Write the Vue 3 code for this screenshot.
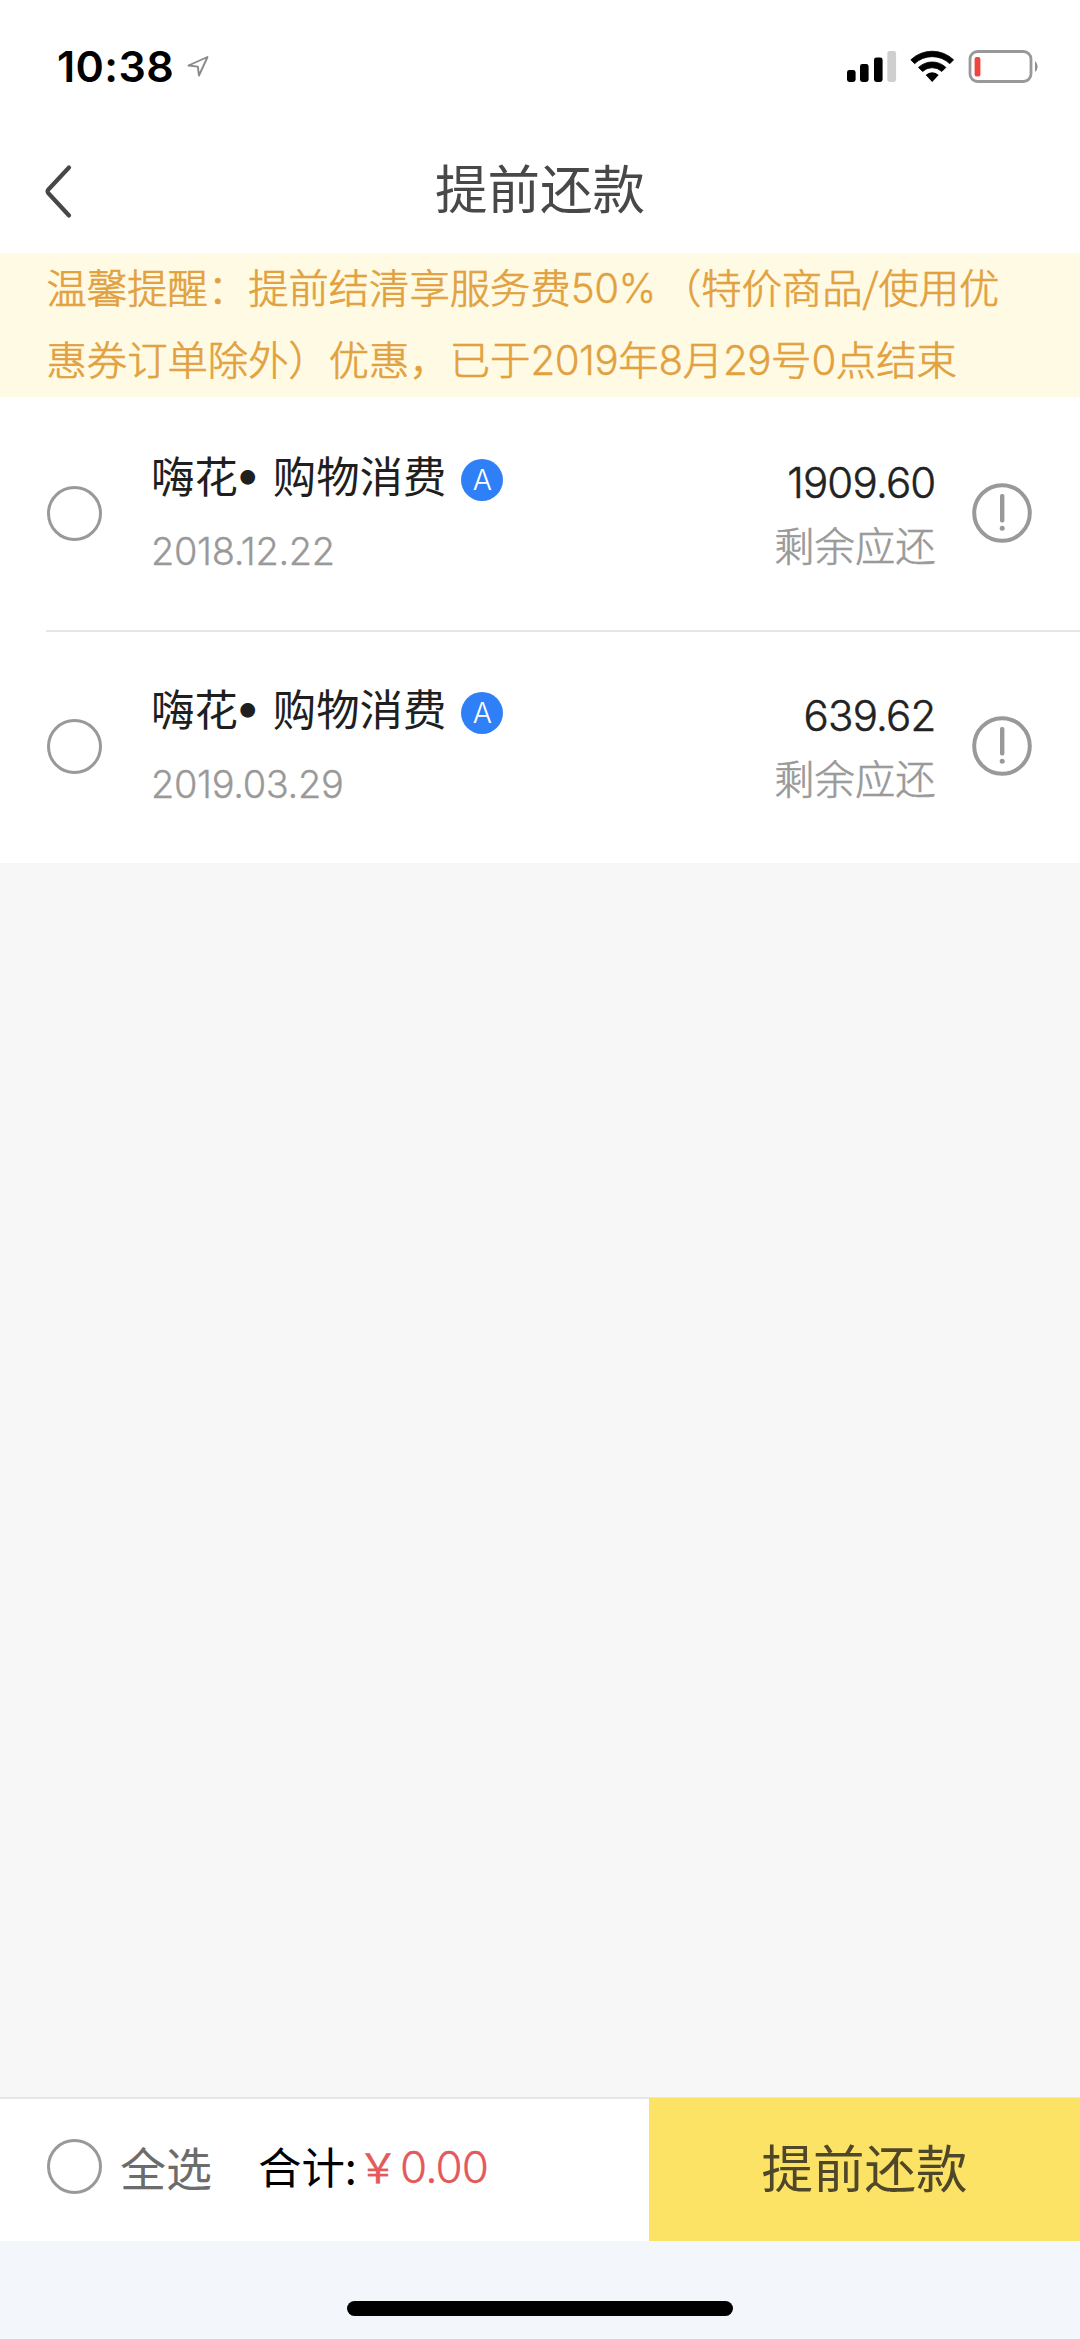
<script setup>
const orders = [
  { id: 1, date: '2018.12.22', amount: '1909.60' },
  { id: 2, date: '2019.03.29', amount: '639.62' },
]
</script>

<template>
  <div class="screen">
    <div class="status">
      <span class="time">10:38</span>
      <svg class="loc" width="24" height="24" viewBox="0 0 24 24">
        <path d="M21.5 3 2.5 11.5 11.8 12.6 13 21.5Z" fill="none" stroke="#8a8a8a" stroke-width="1.9" stroke-linejoin="round" />
      </svg>
      <svg class="indicators" width="196" height="36" viewBox="0 0 196 36">
        <rect x="3" y="22" width="8.6" height="12" rx="2.4" />
        <rect x="16" y="16" width="8.6" height="18" rx="2.4" />
        <rect x="30" y="9.5" width="8.6" height="24.5" rx="2.4" />
        <rect x="43.3" y="3" width="8.8" height="31" rx="2.4" fill="#cfcfcf" />
        <path d="M66.8 11.8 70.6 15.7A25.5 25.5 0 0 1 105.8 15.7L109.6 11.8A31 31 0 0 0 66.8 11.8Z" stroke="#000" stroke-width="0.8" />
        <path d="M74.5 19.4 78.6 23.5A14 14 0 0 1 97.8 23.5L101.9 19.4A20 20 0 0 0 74.5 19.4Z" stroke="#000" stroke-width="0.8" />
        <path d="M81.7 26.9 88.2 33.9 94.7 26.9A9.6 9.6 0 0 0 81.7 26.9Z" />
        <rect x="126" y="3.5" width="61" height="30" rx="7.5" fill="none" stroke="#999" stroke-width="2.8" />
        <rect x="130.6" y="9" width="5.8" height="19.4" rx="2" fill="#f0443f" />
        <path d="M191 13A7 7 0 0 1 191 24Z" fill="#8f8f8f" />
      </svg>
    </div>

    <div class="nav">
      <svg class="back" width="32" height="60" viewBox="0 0 32 60">
        <path d="M27 6.5 6.2 28.8Q5 30.5 6.2 32L27 54.5" fill="none" stroke="#474747" stroke-width="4.2" stroke-linecap="round" stroke-linejoin="round" />
      </svg>
      <h1>提前还款</h1>
    </div>

    <div class="notice">
      <p>温馨提醒：提前结清享服务费<span class="num fifty">50%</span>（特价商品/使用优</p>
      <p>惠券订单除外）优惠，已于<span class="num">2019</span>年<span class="num">8</span>月<span class="num">29</span>号<span class="num">0</span>点结束</p>
    </div>

    <div class="list">
      <div v-for="o in orders" :key="o.id" class="order">
        <span class="radio"></span>
        <div class="info">
          <div class="name">嗨花<span class="dot">•</span>购物消费<span class="badge">A</span></div>
          <div class="date">{{ o.date }}</div>
        </div>
        <div class="money">
          <div class="amount">{{ o.amount }}</div>
          <div class="label">剩余应还</div>
        </div>
        <svg class="tip" width="60" height="60" viewBox="0 0 60 60">
          <circle cx="30" cy="30" r="27.8" fill="none" stroke="#999" stroke-width="4" />
          <rect x="28" y="11" width="4.4" height="28.5" rx="1.8" fill="#999" />
          <circle cx="30.2" cy="45.3" r="2.5" fill="#999" />
        </svg>
      </div>
    </div>

    <div class="blank"></div>

    <div class="bar">
      <span class="radio"></span>
      <span class="all">全选</span>
      <span class="sum">合计:</span>
      <span class="total"><b>￥</b>0.00</span>
      <div class="pay">提前还款</div>
    </div>
    <div class="home"><span></span></div>
  </div>
</template>

<style>
body {
  margin: 0;
  background: #f7f7f7;
}
</style>

<style scoped>
.screen {
  width: 1080px;
  height: 2339px;
  display: flex;
  flex-direction: column;
  background: #f7f7f7;
  font-family: "Noto Sans CJK SC", sans-serif;
  overflow: hidden;
  white-space: nowrap;
}
.status {
  height: 132px;
  background: #fff;
  display: flex;
  align-items: flex-start;
  box-sizing: border-box;
  padding: 48px 40px 0 57px;
}
.time {
  width: 129px;
  font: 600 43px/37px Inter, sans-serif;
  letter-spacing: 0.4px;
  color: #000;
}
.loc {
  margin-top: 6px;
}
.indicators {
  margin-left: auto;
}
.nav {
  height: 121px;
  background: #fff;
  display: flex;
  align-items: flex-start;
}
.back {
  margin: 29px 0 0 42px;
}
h1 {
  margin: 19px 0 0 361px;
  font-size: 52.5px;
  line-height: 70px;
  font-weight: 400;
  color: #484848;
}
.notice {
  height: 144px;
  box-sizing: border-box;
  padding-left: 46.5px;
  background: #fffae3;
  color: #e2a13f;
}
.notice p {
  margin: 0;
  height: 72px;
  font-size: 40.35px;
  line-height: 72px;
  font-weight: 300;
  -webkit-text-stroke: 0.7px #e2a13f;
}
.notice p:first-child {
  margin-top: -3px;
}
.num {
  font-family: Inter, sans-serif;
  line-height: 1;
  letter-spacing: -0.5px;
  font-weight: 300;
  -webkit-text-stroke: 0.3px #e2a13f;
}
.fifty {
  margin-right: 5px;
}
.list {
  background: #fff;
}
.order {
  height: 233px;
  display: flex;
  align-items: flex-start;
  position: relative;
}
.order:first-child::after {
  content: "";
  position: absolute;
  left: 46px;
  right: 0;
  bottom: -2px;
  height: 2px;
  background: #e6e6e6;
}
.radio {
  width: 55px;
  height: 55px;
  box-sizing: border-box;
  border: 3px solid #999;
  border-radius: 50%;
  flex: none;
}
.order .radio {
  margin: 89px 0 0 47px;
}
.info {
  margin: 47px 0 0 49px;
}
.name {
  display: flex;
  font-size: 43.4px;
  line-height: 60px;
  height: 60px;
  color: #1f1f1f;
}
.dot {
  width: 20px;
  margin-right: 15px;
  display: flex;
  justify-content: center;
  font-size: 47px;
  font-family: Inter, sans-serif;
}
.badge {
  width: 42px;
  height: 42px;
  margin: 15px 0 0 15px;
  border-radius: 50%;
  background: #2f80f7;
  color: #fff;
  font: 300 28.5px/42px Inter, sans-serif;
  text-align: center;
}
.date {
  margin-top: 24px;
  font: 300 38px/46px Inter, sans-serif;
  letter-spacing: -0.35px;
  color: #999;
  -webkit-text-stroke: 0.3px #999;
}
.money {
  margin: 61px 36.5px 0 auto;
  text-align: right;
}
.amount {
  font: 300 42px/50px Inter, sans-serif;
  letter-spacing: -0.8px;
  color: #222;
  -webkit-text-stroke: 0.5px #222;
}
.label {
  font-size: 40.3px;
  line-height: 56px;
  margin-top: 8px;
  font-weight: 300;
  color: #999;
  -webkit-text-stroke: 0.6px #999;
}
.tip {
  margin: 86px 48px 0 0;
}
.blank {
  flex: 1;
}
.bar {
  height: 144px;
  box-sizing: border-box;
  border-top: 2px solid #e6e6e6;
  background: #fff;
  display: flex;
  align-items: center;
}
.bar .radio {
  margin-left: 47px;
  margin-top: -7px;
}
.all {
  margin: -9px 0 0 18px;
  width: 120px;
  font-size: 46px;
  color: #6c6c6c;
}
.sum {
  margin-top: -10px;
  margin-left: 18px;
  width: 98px;
  font-size: 43.4px;
  color: #000;
}
.total {
  margin-top: -9px;
  font: 300 44px/60px Inter, sans-serif;
  letter-spacing: -0.9px;
  color: #e4595b;
  -webkit-text-stroke: 0.3px #e4595b;
}
.total b {
  display: inline-block;
  font: 400 41px/60px "Noto Sans CJK SC", sans-serif;
  width: 44px;
  text-indent: 1.5px;
}
.pay {
  align-self: stretch;
  width: 431px;
  margin: -1px 0 0 auto;
  background: #fde365;
  color: #4f4729;
  font-size: 51.5px;
  line-height: 135px;
  text-align: center;
}
.home {
  height: 98px;
  background: #f3f7fb;
  display: flex;
  justify-content: center;
}
.home span {
  width: 386px;
  height: 15px;
  margin-top: 60px;
  border-radius: 8px;
  background: #000;
}
</style>
